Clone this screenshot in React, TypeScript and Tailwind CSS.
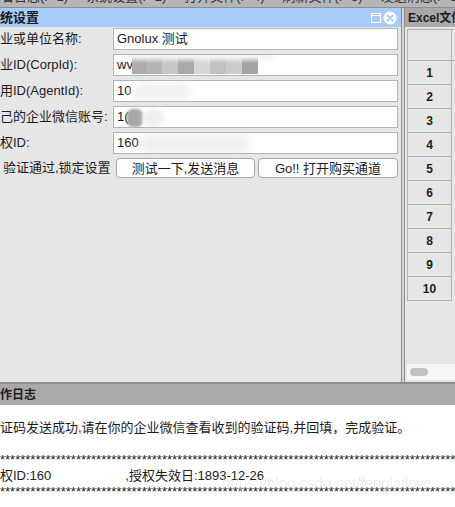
import React from "react";

const FONT = "font-['Liberation_Sans','Noto_Sans_CJK_SC',sans-serif]";

function Input({ children }: { children?: React.ReactNode }) {
  return (
    <div className="relative w-[285px] h-[22px] bg-white border border-[#b3b3b3] pl-[3px] flex items-center overflow-hidden whitespace-nowrap">
      {children}
    </div>
  );
}

function Row({ label, children }: { label: string; children?: React.ReactNode }) {
  return (
    <div className="flex items-center h-[22px]">
      <div className="w-[113px] whitespace-nowrap overflow-hidden">{label}</div>
      <Input>{children}</Input>
    </div>
  );
}

export default function App() {
  const stars = "*".repeat(110);
  const rows = [1, 2, 3, 4, 5, 6, 7, 8, 9, 10];
  return (
    <div className={`relative w-[455px] h-[507px] overflow-hidden bg-white flex flex-col text-[13px] text-[#1c1c1c] ${FONT}`}>
      {/* top menu (cut off) */}
      <div className="h-[8px] shrink-0 bg-[#b6b6b6] border-b border-[#8e8e8e] overflow-hidden">
        <div className="flex whitespace-nowrap leading-[16px] -mt-[11px] gap-[18px] text-[#333]">
          <span className="-ml-[12px]">查看日志(F-1)</span>
          <span>系统设置(F-2)</span>
          <span>打开文件(F-4)</span>
          <span>刷新文件(F-5)</span>
          <span>发送消息(F-6)</span>
        </div>
      </div>

      {/* main area */}
      <div className="flex h-[374px] shrink-0">
        {/* left panel */}
        <div className="w-[401px] flex flex-col bg-[#e6e6e6]">
          <div className="h-[19px] bg-[#a7cbf7] flex items-center justify-between pr-[4px]">
            <span className="font-bold text-[13px] leading-none">统设置</span>
            <div className="flex items-center gap-[2px]">
              <svg width="10" height="10" viewBox="0 0 10 10">
                <rect x="0.5" y="0.5" width="9" height="9" fill="none" stroke="#ffffff" strokeWidth="1" />
                <line x1="0.5" y1="2.5" x2="9.5" y2="2.5" stroke="#ffffff" strokeWidth="1" />
              </svg>
              <svg width="14" height="14" viewBox="0 0 14 14">
                <circle cx="7" cy="7" r="6.5" fill="#ffffff" />
                <path d="M4.4 4.4 L9.6 9.6 M9.6 4.4 L4.4 9.6" stroke="#a7cbf7" strokeWidth="2" strokeLinecap="round" />
              </svg>
            </div>
          </div>

          <div className="flex flex-col gap-[4px] pt-[1px]">
            <Row label="业或单位名称:">
              <span>Gnolux 测试</span>
            </Row>
            <Row label="业ID(CorpId):">
              <span>wv</span>
              <div className="absolute left-[18px] top-[2px] h-[17px] flex blur-[0.6px]">
                <div className="w-[14px] bg-[#ababab]" />
                <div className="w-[16px] bg-[#b4b4b4]" />
                <div className="w-[16px] bg-[#c6c6c6]" />
                <div className="w-[16px] bg-[#a9a9a9]" />
                <div className="w-[16px] bg-[#d6d6d6]" />
                <div className="w-[16px] bg-[#c1c1c1]" />
                <div className="w-[16px] bg-[#cbcbcb]" />
                <div className="w-[16px] bg-[#a3a3a3]" />
              </div>
              <div className="absolute left-[10px] -top-[4px] w-[150px] h-[9px] rounded-full bg-[#f4f4f4] blur-[2px]" />
            </Row>
            <Row label="用ID(AgentId):">
              <span>10</span>
              <div className="absolute left-[18px] top-[2px] w-[60px] h-[18px] rounded-full bg-[#f2f2f2] blur-[3px]" />
            </Row>
            <Row label="己的企业微信账号:">
              <span>1(</span>
              <div className="absolute left-[13px] top-[2px] w-[16px] h-[18px] rounded-[6px] bg-[#a6a6a6] blur-[1px]" />
              <div className="absolute left-[28px] top-[2px] w-[22px] h-[18px] rounded-full bg-[#efefef] blur-[2px]" />
            </Row>
            <Row label="权ID:">
              <span>160</span>
              <div className="absolute left-[26px] top-[1px] w-[110px] h-[20px] rounded-full bg-[#f1f1f1] blur-[3px]" />
            </Row>

            <div className="flex items-center h-[20px]">
              <div className="w-[116px] pl-[3px] whitespace-nowrap">验证通过,锁定设置</div>
              <button className="w-[139px] h-[20px] bg-white border border-[#a9a9a9] rounded-[4px] text-[13px] leading-none flex items-center justify-center">
                测试一下,发送消息
              </button>
              <button className="ml-[3px] w-[140px] h-[20px] bg-white border border-[#a9a9a9] rounded-[4px] text-[13px] leading-none flex items-center justify-center">
                Go!! 打开购买通道
              </button>
            </div>
          </div>
        </div>

        {/* splitter */}
        <div className="w-[4px] border-l border-r border-[#8e8e8e] bg-[#d4d4d4]" />

        {/* right panel */}
        <div className="flex-1 flex flex-col bg-[#e6e6e6] overflow-hidden">
          <div className="h-[19px] bg-[#a9a9a9] flex items-center pl-[3px] whitespace-nowrap">
            <span className="font-bold text-[12px] leading-none">Excel文件</span>
          </div>
          <div className="flex-1 flex flex-col pt-[2px] pl-[2px]">
            <div className="flex-1 flex flex-col">
              <div className="flex">
                <div className="w-[45px] shrink-0 flex flex-col border-l border-[#b0b0b0]">
                  <div className="h-[32px] border-t border-b border-r border-[#b0b0b0] bg-[#e6e6e6]" />
                  {rows.map((n) => (
                    <div
                      key={n}
                      className="h-[24px] border-b border-r border-[#b0b0b0] bg-[#e6e6e6] flex items-center justify-center font-bold text-[12px]"
                    >
                      {n}
                    </div>
                  ))}
                </div>
                <div className="flex-1 h-[32px] border-t border-b border-[#b0b0b0] bg-[#e8e8e8]" />
              </div>
            </div>
            <div className="h-[16px] bg-[#f6f6f6] flex items-center pl-[3px] mb-[2px]">
              <div className="w-[18px] h-[8px] rounded-full bg-[#c2c2c2]" />
            </div>
          </div>
        </div>
      </div>

      {/* log header */}
      <div className="h-[23px] shrink-0 bg-[#a9a9a9] border-t-2 border-[#8c8c8c] flex items-center">
        <span className="font-bold text-[12px] leading-none">作日志</span>
      </div>

      {/* log body */}
      <div className="flex-1 bg-white pt-[15px] leading-[16px] whitespace-nowrap overflow-hidden">
        <div>证码发送成功,请在你的企业微信查看收到的验证码,并回填，完成验证。</div>
        <div className="h-[16px]" />
        <div className="overflow-hidden">{stars}</div>
        <div className="flex">
          <span>权ID:160</span>
          <span className="w-[74px]" />
          <span>,授权失效日:1893-12-26</span>
        </div>
        <div className="overflow-hidden">{stars}</div>
      </div>

      {/* watermark */}
      <div className="absolute left-[222px] top-[472px] text-[15px] text-[#dcdcdc] opacity-50 whitespace-nowrap">
        https://blog.csdn.net/fenglailove
      </div>
    </div>
  );
}
